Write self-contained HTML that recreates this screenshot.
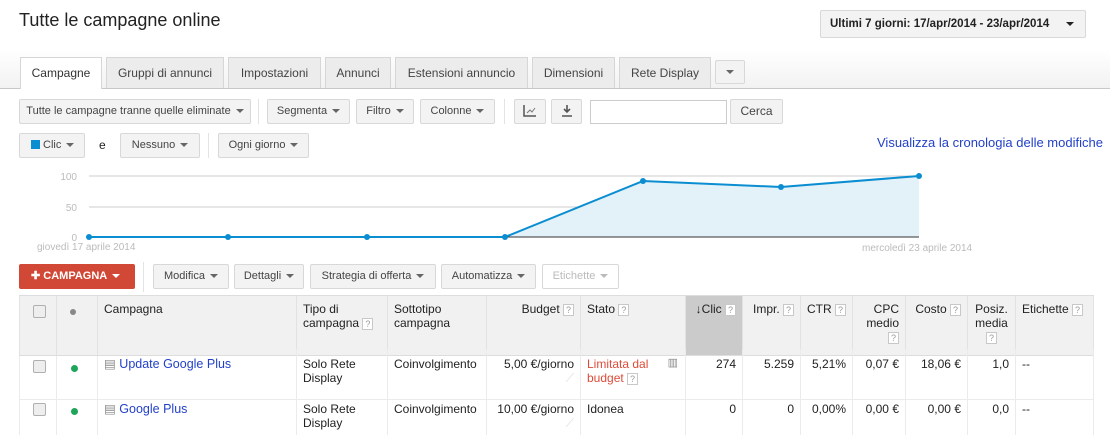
<!DOCTYPE html>
<html><head><meta charset="utf-8"><style>
*{box-sizing:border-box;margin:0;padding:0}
body{width:1110px;height:435px;overflow:hidden;background:#fff;font-family:"Liberation Sans",Arial,sans-serif;font-size:12px;color:#222;position:relative}
.a{position:absolute}
.btn{position:absolute;height:25px;border:1px solid #d8d8d8;background:#f3f3f3;border-radius:2px;font-size:11px;color:#444;line-height:23px;text-align:center;white-space:nowrap}
.car{display:inline-block;width:0;height:0;border-left:4px solid transparent;border-right:4px solid transparent;border-top:4px solid #666;vertical-align:middle;margin-left:5px}
.tab{position:absolute;top:57px;height:31px;border:1px solid #d6d6d6;border-bottom:none;background:#ececec;font-size:12px;color:#444;line-height:31px;text-align:center}
.sep{position:absolute;width:1px;background:#e3e3e3}
.q{display:inline-block;width:11px;height:12px;border:1px solid #c8c8c8;font-size:9px;line-height:10px;text-align:center;color:#999;background:#fff;vertical-align:middle;font-weight:normal}
.th{position:absolute;top:296px;height:59px;background:#f1f1f1;border-right:1px solid #e2e2e2;font-size:12px;padding:6px 6px;line-height:14px;color:#222}
.td{position:absolute;border-right:1px solid #ebebeb;font-size:12px;padding:8px 6px;line-height:14px}
.r{text-align:right}
.cb{position:absolute;width:13px;height:13px;border:1px solid #b0b0b0;border-radius:2px;background:#eee}
.dot{position:absolute;width:7px;height:7px;border-radius:50%;background:#1fa55a}
a{color:#2341c8;text-decoration:none}
</style></head><body>
<div class="a" style="left:19px;top:10px;font-size:18px;color:#222">Tutte le campagne online</div>
<div class="btn" style="left:820px;top:10px;width:266px;height:28px;line-height:26px;font-size:11.5px;font-weight:bold;color:#222;text-align:left;padding-left:9px">Ultimi 7 giorni: 17/apr/2014 - 23/apr/2014<span class="car" style="border-top-color:#222;position:absolute;right:11px;top:11px"></span></div>
<div class="a" style="left:0;top:50px;width:1110px;height:38px;background:linear-gradient(#fff,#f2f2f2)"></div>
<div class="a" style="left:0;top:88px;width:1110px;height:1px;background:#c8c8c8"></div>
<div class="tab" style="left:20px;width:82px;background:#fff;height:32px;color:#333">Campagne</div>
<div class="tab" style="left:106px;width:118px">Gruppi di annunci</div>
<div class="tab" style="left:228px;width:93px">Impostazioni</div>
<div class="tab" style="left:325px;width:66px">Annunci</div>
<div class="tab" style="left:395px;width:133px">Estensioni annuncio</div>
<div class="tab" style="left:532px;width:83px">Dimensioni</div>
<div class="tab" style="left:619px;width:92px">Rete Display</div>
<div class="btn" style="left:715px;top:60px;width:30px;height:24px"><span class="car" style="margin:0"></span></div>

<div class="btn" style="left:19px;top:99px;width:232px">Tutte le campagne tranne quelle eliminate<span class="car"></span></div>
<div class="sep" style="left:258px;top:99px;height:25px"></div>
<div class="btn" style="left:267px;top:99px;width:83px">Segmenta<span class="car"></span></div>
<div class="btn" style="left:356px;top:99px;width:58px">Filtro<span class="car"></span></div>
<div class="btn" style="left:420px;top:99px;width:75px">Colonne<span class="car"></span></div>
<div class="sep" style="left:504px;top:99px;height:25px"></div>
<div class="btn" style="left:514px;top:99px;width:32px"><svg width="14" height="12" style="vertical-align:middle"><path d="M1 0V11H13" stroke="#555" stroke-width="1.5" fill="none"/><path d="M4 8L7 5 9 7 12 3" stroke="#777" fill="none"/></svg></div>
<div class="btn" style="left:551px;top:99px;width:31px"><svg width="12" height="12" style="vertical-align:middle"><path d="M6 0V7M3 4L6 7 9 4M1 11H11" stroke="#555" stroke-width="1.6" fill="none"/></svg></div>
<div class="a" style="left:590px;top:100px;width:137px;height:24px;border:1px solid #ccc;background:#fff"></div>
<div class="btn" style="left:730px;top:99px;width:53px;font-size:12px">Cerca</div>

<div class="btn" style="left:19px;top:133px;width:66px;text-align:left;padding-left:11px"><span style="display:inline-block;width:9px;height:9px;background:#0a8ed1;vertical-align:-1px;margin-right:3px"></span>Clic<span class="car"></span></div>
<div class="a" style="left:99px;top:138px;font-size:12px">e</div>
<div class="btn" style="left:120px;top:133px;width:80px">Nessuno<span class="car"></span></div>
<div class="sep" style="left:208px;top:133px;height:25px"></div>
<div class="btn" style="left:218px;top:133px;width:91px">Ogni giorno<span class="car"></span></div>
<div class="a" style="left:877px;top:135px;font-size:13px;color:#2341c8">Visualizza la cronologia delle modifiche</div>

<svg class="a" style="left:0;top:160px" width="1110" height="100">
<line x1="89" y1="16" x2="919" y2="16" stroke="#ccc"/>
<line x1="89" y1="47" x2="919" y2="47" stroke="#ccc"/>
<path d="M505 77L643 21 781 27 919 16V77Z" fill="#e3f1f8"/>
<line x1="89" y1="77" x2="919" y2="77" stroke="#333"/>
<polyline points="89,77 228,77 367,77 505,77 643,21 781,27 919,16" fill="none" stroke="#0a8ed1" stroke-width="2"/>
<g fill="#0a8ed1"><circle cx="89" cy="77" r="3"/><circle cx="228" cy="77" r="3"/><circle cx="367" cy="77" r="3"/><circle cx="505" cy="77" r="3"/><circle cx="643" cy="21" r="3"/><circle cx="781" cy="27" r="3"/><circle cx="919" cy="16" r="3"/></g>
<g font-family="Liberation Sans,Arial" font-size="10" fill="#bbb"><text x="77" y="20" text-anchor="end">100</text><text x="77" y="51" text-anchor="end">50</text><text x="77" y="81" text-anchor="end">0</text><text x="37" y="90">giovedì 17 aprile 2014</text><text x="862" y="91">mercoledì 23 aprile 2014</text></g>
</svg>

<div class="a" style="left:19px;top:264px;width:116px;height:25px;background:#d14836;border-radius:2px;color:#fff;font-weight:bold;font-size:11px;line-height:25px;padding-left:12px">✚ CAMPAGNA<span class="car" style="border-top-color:#fff"></span></div>
<div class="sep" style="left:143px;top:262px;height:30px"></div>
<div class="btn" style="left:153px;top:264px;width:76px">Modifica<span class="car"></span></div>
<div class="btn" style="left:234px;top:264px;width:70px">Dettagli<span class="car"></span></div>
<div class="btn" style="left:310px;top:264px;width:126px">Strategia di offerta<span class="car"></span></div>
<div class="btn" style="left:441px;top:264px;width:95px">Automatizza<span class="car"></span></div>
<div class="btn" style="left:542px;top:264px;width:77px;background:#fff;color:#bbb">Etichette<span class="car" style="border-top-color:#bbb"></span></div>

<div class="a" style="left:19px;top:295px;width:1075px;height:1px;background:#ddd"></div>
<div class="th" style="left:19px;width:38px;border-left:1px solid #e2e2e2"></div>
<div class="cb" style="left:33px;top:305px"></div>
<div class="th" style="left:57px;width:41px"></div>
<div class="dot" style="left:70px;top:309px;background:#888;width:6px;height:6px"></div>
<div class="th" style="left:98px;width:199px">Campagna</div>
<div class="th" style="left:297px;width:91px">Tipo di<br>campagna <span class="q">?</span></div>
<div class="th" style="left:388px;width:99px">Sottotipo<br>campagna</div>
<div class="th r" style="left:487px;width:94px">Budget <span class="q">?</span></div>
<div class="th" style="left:581px;width:105px">Stato <span class="q">?</span></div>
<div class="th r" style="left:686px;width:57px;background:#cbcbcb">↓Clic <span class="q">?</span></div>
<div class="th r" style="left:743px;width:58px">Impr. <span class="q">?</span></div>
<div class="th r" style="left:801px;width:52px">CTR <span class="q">?</span></div>
<div class="th r" style="left:853px;width:53px">CPC<br>medio<br><span class="q">?</span></div>
<div class="th r" style="left:906px;width:62px">Costo <span class="q">?</span></div>
<div class="th r" style="left:968px;width:48px;text-align:center">Posiz.<br>media<br><span class="q">?</span></div>
<div class="th" style="left:1016px;width:78px">Etichette <span class="q">?</span></div>
<div class="a" style="left:19px;top:355px;width:1075px;height:1px;background:#ddd"></div>

<div class="a" style="left:19px;top:356px;width:1075px;height:44px;border-bottom:1px solid #ebebeb"></div>
<div class="td" style="left:19px;top:356px;width:38px;height:44px;border-left:1px solid #ebebeb"></div>
<div class="cb" style="left:33px;top:360px"></div>
<div class="td" style="left:57px;top:356px;width:41px;height:44px"></div><div class="dot" style="left:71px;top:365px"></div>
<div class="td" style="left:98px;top:349px;width:199px;height:51px;font-size:12.5px"><span style="color:#888">▤</span> <a>Update Google Plus</a></div>
<div class="td" style="left:297px;top:349px;width:91px;height:51px">Solo Rete<br>Display</div>
<div class="td" style="left:388px;top:349px;width:99px;height:51px">Coinvolgimento</div>
<div class="td r" style="left:487px;top:349px;width:94px;height:51px">5,00 €/giorno<br><span style="color:#ddd">⟋</span></div>
<div class="td" style="left:581px;top:349px;width:105px;height:51px;color:#dd4b39">Limitata dal<br>budget <span class="q">?</span><span style="position:absolute;right:7px;top:7px;color:#888;font-size:11px">▥</span></div>
<div class="td r" style="left:686px;top:349px;width:57px;height:51px">274</div>
<div class="td r" style="left:743px;top:349px;width:58px;height:51px">5.259</div>
<div class="td r" style="left:801px;top:349px;width:52px;height:51px">5,21%</div>
<div class="td r" style="left:853px;top:349px;width:53px;height:51px">0,07 €</div>
<div class="td r" style="left:906px;top:349px;width:62px;height:51px">18,06 €</div>
<div class="td r" style="left:968px;top:349px;width:48px;height:51px">1,0</div>
<div class="td" style="left:1016px;top:349px;width:78px;height:51px">--</div>

<div class="td" style="left:19px;top:400px;width:38px;height:35px;border-left:1px solid #ebebeb"></div>
<div class="cb" style="left:33px;top:403px"></div>
<div class="td" style="left:57px;top:400px;width:41px;height:35px"></div><div class="dot" style="left:71px;top:408px"></div>
<div class="td" style="left:98px;top:394px;width:199px;height:41px;font-size:12.5px"><span style="color:#888">▤</span> <a>Google Plus</a></div>
<div class="td" style="left:297px;top:394px;width:91px;height:41px">Solo Rete<br>Display</div>
<div class="td" style="left:388px;top:394px;width:99px;height:41px">Coinvolgimento</div>
<div class="td r" style="left:487px;top:394px;width:94px;height:41px">10,00 €/giorno<br><span style="color:#ddd">⟋</span></div>
<div class="td" style="left:581px;top:394px;width:105px;height:41px">Idonea</div>
<div class="td r" style="left:686px;top:394px;width:57px;height:41px">0</div>
<div class="td r" style="left:743px;top:394px;width:58px;height:41px">0</div>
<div class="td r" style="left:801px;top:394px;width:52px;height:41px">0,00%</div>
<div class="td r" style="left:853px;top:394px;width:53px;height:41px">0,00 €</div>
<div class="td r" style="left:906px;top:394px;width:62px;height:41px">0,00 €</div>
<div class="td r" style="left:968px;top:394px;width:48px;height:41px">0,0</div>
<div class="td" style="left:1016px;top:394px;width:78px;height:41px">--</div>
</body></html>
